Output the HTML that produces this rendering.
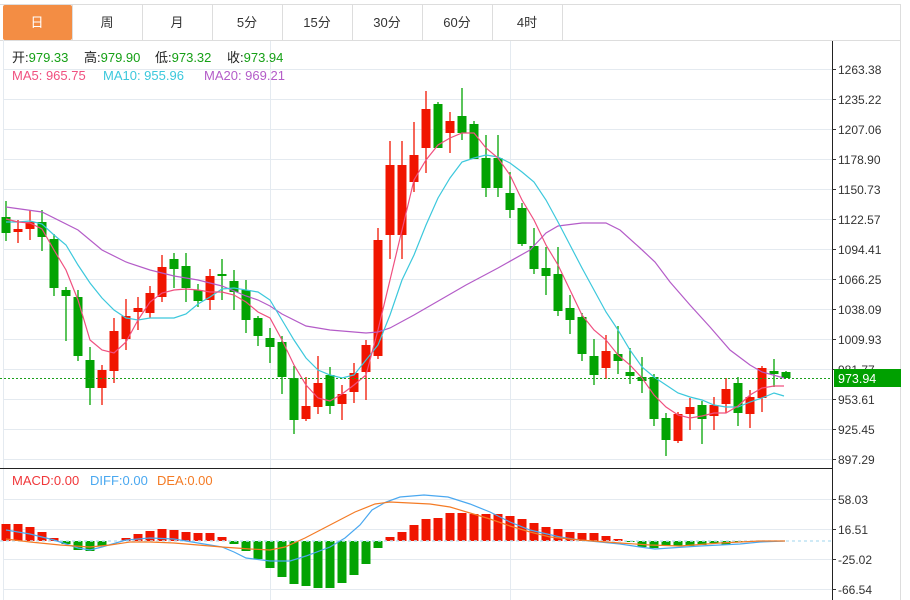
<!DOCTYPE html>
<html><head><meta charset="utf-8"><style>
body{margin:0;background:#fff;width:910px;height:600px;overflow:hidden;font-family:"Liberation Sans","Noto Sans CJK SC",sans-serif}
svg{position:absolute;left:0;top:0}
</style></head><body>
<svg width="910" height="600" xmlns="http://www.w3.org/2000/svg" font-family="Liberation Sans, Noto Sans CJK SC, sans-serif">
<g id="grid" stroke="#e4eaf0" stroke-width="1"></g>
<line x1="0" y1="4.5" x2="901" y2="4.5" stroke="#ddd"/>
<line x1="0" y1="40.5" x2="901" y2="40.5" stroke="#ddd"/>
<line x1="900.5" y1="4" x2="900.5" y2="600" stroke="#ddd"/>
<line x1="3.5" y1="40" x2="3.5" y2="600" stroke="#e4eaf0"/>
<g stroke="#ddd"><line x1="72.5" y1="4" x2="72.5" y2="40"/><line x1="142.5" y1="4" x2="142.5" y2="40"/><line x1="212.5" y1="4" x2="212.5" y2="40"/><line x1="282.5" y1="4" x2="282.5" y2="40"/><line x1="352.5" y1="4" x2="352.5" y2="40"/><line x1="422.5" y1="4" x2="422.5" y2="40"/><line x1="492.5" y1="4" x2="492.5" y2="40"/><line x1="562.5" y1="4" x2="562.5" y2="40"/></g>
<rect x="3" y="5" width="69" height="35" fill="#f38d44" rx="2"/>
<g font-size="13" fill="#333" text-anchor="middle">
<text x="37" y="27" fill="#fff">日</text><text x="107" y="27">周</text><text x="177" y="27">月</text><text x="247" y="27">5分</text><text x="317" y="27">15分</text><text x="387" y="27">30分</text><text x="457" y="27">60分</text><text x="527" y="27">4时</text>
</g>
<g font-size="13">
<text x="12" y="62" fill="#222">开:<tspan fill="#16a016">979.33</tspan></text>
<text x="84" y="62" fill="#222">高:<tspan fill="#16a016">979.90</tspan></text>
<text x="155" y="62" fill="#222">低:<tspan fill="#16a016">973.32</tspan></text>
<text x="227" y="62" fill="#222">收:<tspan fill="#16a016">973.94</tspan></text>
<text x="12" y="80" fill="#f0507f">MA5: 965.75</text>
<text x="103" y="80" fill="#3cc8dc">MA10: 955.96</text>
<text x="204" y="80" fill="#b45cc8">MA20: 969.21</text>
<text x="12" y="485" fill="#f0373a">MACD:0.00</text>
<text x="90" y="485" fill="#4aa8f0">DIFF:0.00</text>
<text x="157" y="485" fill="#f47b25">DEA:0.00</text>
</g>
<g id="candles"></g>
<g id="bars"></g>
<polyline fill="none" stroke="#b45cc8" stroke-width="1.2" points="6,207 42,212 78,230 102,250 126,262 150,270 174,276 198,280 222,286 246,296 258,300 270,306 282,314 306,326 330,330 366,333 378,332 390,328 414,315 440,300 466,285 498,268 530,250 546,233 558,226 582,223 606,223 620,230 640,248 655,262 670,282 690,305 710,327 730,350 750,365 762,372 784,378"/>
<polyline fill="none" stroke="#3cc8dc" stroke-width="1.2" points="6,222 18,222 30,221 42,224 54,235 66,245 78,265 90,283 102,298 114,310 126,318 138,320 150,318 162,318 174,318 186,314 198,304 210,297 222,289 234,288 246,290 258,292 270,300 282,320 294,340 306,358 318,370 330,375 342,378 354,375 366,360 378,345 390,315 402,280 414,255 426,225 438,198 450,178 462,162 474,158 486,155 498,157 510,163 522,172 534,182 546,200 558,222 570,245 582,268 594,290 606,312 618,330 630,350 642,367 654,377 666,385 678,393 690,397 702,400 714,405 726,407 738,407 750,402 762,398 774,393 784,396"/>
<polyline fill="none" stroke="#f0507f" stroke-width="1.2" points="6,219 18,222 30,223 42,229 54,250 66,270 78,300 90,340 102,350 114,353 126,342 138,320 150,302 162,293 174,290 186,289 198,290 210,292 222,292 234,295 246,302 258,312 270,318 282,340 294,365 306,385 318,398 330,401 342,394 354,385 366,375 378,330 390,280 402,230 414,180 426,160 438,145 450,138 462,133 474,133 486,148 498,158 510,175 522,200 534,220 546,245 558,265 570,290 582,315 594,330 606,340 618,355 630,365 642,378 654,395 666,407 678,415 690,418 702,416 714,413 726,413 738,406 750,395 762,388 774,386 784,386"/>
<line x1="0" y1="378.5" x2="832" y2="378.5" stroke="#1aa01a" stroke-dasharray="2,2"/>
<line x1="0" y1="541" x2="832" y2="541" stroke="#bfe4f4" stroke-width="1.5" stroke-dasharray="3,3"/>
<polyline fill="none" stroke="#4aa8f0" stroke-width="1.2" points="6,530 30,534 54,540 78,548 90,550 102,547 126,540 150,538 174,539 198,543 222,547 234,552 246,558 270,561 290,561 306,556 330,547 345,538 360,525 372,510 386,502 400,497 424,495 448,497 470,504 490,512 510,522 530,530 560,537 580,540 620,544 640,547 655,549 670,548 700,546 720,545 740,544 760,542 785,541"/>
<polyline fill="none" stroke="#f47b25" stroke-width="1.2" points="6,539 30,542 60,545 90,547 110,545 130,542 150,542 174,543 198,545 222,547 250,549 270,550 285,547 305,538 330,525 355,512 375,504 390,502 410,503 430,504 450,507 470,513 490,519 510,526 530,532 550,537 580,540 620,543 650,545 680,546 720,543 760,541 785,541"/>
<line x1="0" y1="468.5" x2="832" y2="468.5" stroke="#222"/>
<line x1="832.5" y1="41" x2="832.5" y2="600" stroke="#222"/>
<g id="ticks" font-size="12" fill="#333"></g>
<rect x="834" y="369" width="67" height="18" fill="#00a000"/>
<text x="838" y="383" font-size="12.5" fill="#fff">973.94</text>
</svg>
<script>
var ns="http://www.w3.org/2000/svg";
function el(p,t,a){var e=document.createElementNS(ns,t);for(var k in a)e.setAttribute(k,a[k]);p.appendChild(e);return e;}
var grid=document.getElementById('grid'),ticks=document.getElementById('ticks');
var pl=["1263.38","1235.22","1207.06","1178.90","1150.73","1122.57","1094.41","1066.25","1038.09","1009.93","981.77","953.61","925.45","897.29"];
pl.forEach(function(s,i){var y=69+30*i+0.5;el(grid,'line',{x1:4,y1:y,x2:832,y2:y});el(ticks,'line',{x1:832,y1:y,x2:836,y2:y,stroke:'#333'});var t=el(ticks,'text',{x:838,y:y+4.5});t.textContent=s;});
var ml=["58.03","16.51","-25.02","-66.54"];
ml.forEach(function(s,i){var y=499+30*i+0.5;el(grid,'line',{x1:4,y1:y,x2:832,y2:y});el(ticks,'line',{x1:832,y1:y,x2:836,y2:y,stroke:'#333'});var t=el(ticks,'text',{x:838,y:y+4.5});t.textContent=s;});
[270.5,510.5].forEach(function(x){el(grid,'line',{x1:x,y1:41,x2:x,y2:600});});
var C=[
['g',217,233,201,241],['r',229,232,220,243],['r',222,229,210,240],['g',222,237,210,251],['g',239,288,234,296],['g',290,296,287,341],['g',297,356,290,361],['g',360,388,347,405],['r',370,388,365,405],['r',331,371,318,383],
['r',316,339,299,350],['r',308,312,297,330],['r',293,313,286,318],['r',267,297,255,302],['g',259,269,253,288],['g',266,288,253,302],['g',290,301,284,307],['r',276,300,269,310],['g',274,276,259,300],['g',281,292,270,310],
['g',290,320,280,333],['g',318,336,316,346],['g',338,347,328,363],['g',342,377,336,394],['g',378,420,366,434],['r',406,419,377,421],['r',383,407,356,414],['g',375,406,367,414],['r',394,404,385,420],['r',373,392,363,403],
['r',345,372,340,400],['r',240,356,228,359],['r',165,235,141,259],['r',165,235,141,259],['r',155,182,122,192],['r',109,148,91,173],['g',104,148,102,148],['r',121,133,112,153],['g',116,133,88,140],['g',124,159,121,159],
['g',158,188,135,197],['g',158,188,135,197],['g',193,210,172,218],['g',208,244,203,246],['g',246,269,228,274],['g',268,276,247,295],['g',274,311,247,316],['g',308,320,295,334],['g',317,354,313,361],['g',356,375,339,385],
['r',351,368,335,379],['g',354,361,326,374],['g',372,376,348,384],['g',377,381,357,393],['g',377,419,374,426],['g',418,440,413,456],['r',414,441,412,443],['r',407,414,398,430],['g',405,419,401,444],['r',405,416,397,430],
['r',389,404,378,413],['g',383,413,377,426],['r',397,414,390,428],['r',368,398,366,412],['g',371,374,359,387],['g',372,378,371,378]];
var cg=document.getElementById('candles');
C.forEach(function(c,i){var x=6+12*i,col=c[0]=='r'?'#f01500':'#03a303';
el(cg,'line',{x1:x,y1:c[3],x2:x,y2:c[4],stroke:col,'stroke-width':1.3});
el(cg,'rect',{x:x-4.5,y:c[1],width:9,height:Math.max(2,c[2]-c[1]),fill:col});});
var B=[524,524,527,532,538,544,550,551,546,541,538,534,531,529,530,532,533,533,537,544,551,559,568,577,584,586,588,588,583,575,564,548,537,532,525,519,518,513,513,514,514,514,516,519,523,527,529,532,533,533,536,539,542,547,548,546,546,546,545,543,545,542,541,541,541,541];
var bg=document.getElementById('bars');
B.forEach(function(t,i){var x=6+12*i;if(Math.abs(t-541)<1)return;var up=t<541;
el(bg,'rect',{x:x-4.5,y:Math.min(t,541),width:9,height:Math.abs(t-541),fill:up?'#f01500':'#03a303'});});
</script>
</body></html>
